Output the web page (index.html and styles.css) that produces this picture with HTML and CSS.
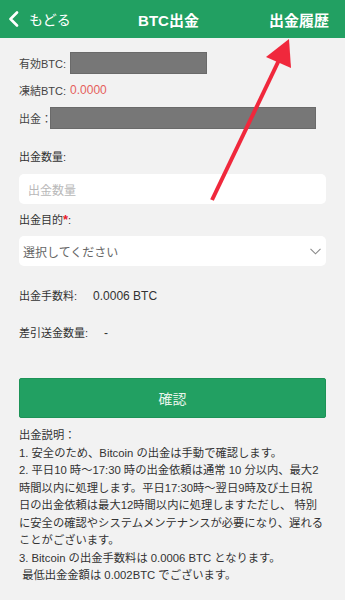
FILE: index.html
```html
<!DOCTYPE html>
<html lang="ja">
<head>
<meta charset="utf-8">
<title>BTC出金</title>
<link rel="stylesheet" href="styles.css">
</head>
<body>
<div class="page">
  <header class="nav">
    <div class="nav-back">
      <svg class="chev" width="11" height="16" viewBox="0 0 11 16"><polyline points="9,1.5 2.5,8 9,14.5" fill="none" stroke="#fff" stroke-width="2.6" stroke-linecap="round" stroke-linejoin="round"/></svg>
      <span>もどる</span>
    </div>
    <div class="nav-title">BTC出金</div>
    <div class="nav-right">出金履歴</div>
  </header>

  <main class="content">
    <div class="info-row r1"><span class="lbl">有効BTC:</span><span class="mask mask-short"></span></div>
    <div class="info-row r2"><span class="lbl">凍結BTC:</span><span class="red">0.0000</span></div>
    <div class="info-row r3"><span class="lbl">出金：</span><span class="mask mask-long"></span></div>

    <div class="field-label fl1">出金数量:</div>
    <div class="input"><span class="placeholder">出金数量</span></div>

    <div class="field-label fl2">出金目的<span class="star">*</span>:</div>
    <div class="select">
      <span class="select-text">選択してください</span>
      <svg class="select-chev" width="11" height="7" viewBox="0 0 11 7"><polyline points="0.5,0.8 5.5,5.8 10.5,0.8" fill="none" stroke="#8a8a8a" stroke-width="1.1"/></svg>
    </div>

    <div class="kv kv1"><span class="k">出金手数料:</span><span class="v v1">0.0006 BTC</span></div>
    <div class="kv kv2"><span class="k">差引送金数量:</span><span class="v v2">-</span></div>

    <button class="confirm">確認</button>

    <div class="notes">出金説明：<br>1. 安全のため、Bitcoin の出金は手動で確認します。<br>2. 平日10 時～17:30 時の出金依頼は通常 10 分以内、最大2<br>時間以内に処理します。平日17:30時～翌日9時及び土日祝<br>日の出金依頼は最大12時間以内に処理しますただし、 特別<br>に安全の確認やシステムメンテナンスが必要になり、遅れる<br>ことがございます。<br>3. Bitcoin の出金手数料は 0.0006 BTC となります。<br>&nbsp;最低出金金額は 0.002BTC でございます。</div>
  </main>

  <svg class="annotation" width="345" height="600" viewBox="0 0 345 600">
    <line x1="212" y1="200" x2="280" y2="58" stroke="#f0283c" stroke-width="4"/>
    <polygon points="289,39 266,57 291,68" fill="#f0283c"/>
  </svg>
</div>
</body>
</html>
```

FILE: styles.css
```css
* { box-sizing: border-box; }
html, body { margin: 0; padding: 0; }
body {
  background: #f2f2f2;
  font-family: "Liberation Sans", "Noto Sans CJK JP", sans-serif;
  color: #333;
  width: 345px;
  height: 600px;
  overflow: hidden;
}
.page { position: relative; width: 345px; height: 600px; }

.nav {
  height: 38px;
  background: #22a062;
  color: #fff;
  display: grid;
  grid-template-columns: 1fr auto 1fr;
  align-items: center;
  padding: 0 16px 0 8px;
}
.nav-back { display: flex; align-items: center; font-size: 14px; }
.nav-back .chev { margin-right: 10px; }
.nav-title { font-size: 15px; font-weight: bold; }
.nav-right { justify-self: end; font-size: 15px; font-weight: bold; }

.content { padding: 0 19px; }

.info-row {
  display: flex;
  align-items: center;
  height: 22px;
  font-size: 11px;
  color: #444;
}
.r1 { margin-top: 14px; }
.r2 { margin-top: 5px; }
.r3 { margin-top: 6px; }
.red { color: #e5605b; font-size: 12px; margin-left: 4px; }
.mask { display: block; height: 22px; background: #777; border: 1px solid #6a6a6a; }
.mask-short { width: 137px; margin-left: 4px; }
.mask-long { width: 266px; margin-left: -2px; }

.field-label { font-size: 11px; line-height: 16px; color: #333; }
.fl1 { margin-top: 20px; }
.fl2 { margin-top: 8px; }
.star { color: #e8202a; font-weight: bold; font-size: 13px; }

.input, .select {
  height: 30px;
  background: #fff;
  border-radius: 5px;
  display: flex;
  align-items: center;
  margin-top: 8px;
  font-size: 12px;
}
.input { margin-top: 9px; padding-left: 9px; }
.placeholder { color: #b8b8b8; }
.select { padding: 0 5px 0 4px; justify-content: space-between; }
.select-text { color: #666; }

.kv { display: flex; font-size: 11px; line-height: 16px; color: #333; }
.kv1 { margin-top: 22px; }
.kv2 { margin-top: 21px; }
.v { font-size: 12px; }
.v1 { margin-left: 16px; }
.v2 { margin-left: 16px; }

.confirm {
  display: block;
  width: 100%;
  height: 40px;
  margin-top: 37px;
  background: #22a062;
  border: 1px solid #1d9357;
  border-radius: 2px;
  color: #e6f4ea;
  font-family: inherit;
  font-size: 14px;
}

.notes {
  margin-top: 9px;
  font-size: 11.3px;
  line-height: 17.5px;
  color: #333;
  white-space: nowrap;
}

.annotation { position: absolute; top: 0; left: 0; pointer-events: none; }
```
